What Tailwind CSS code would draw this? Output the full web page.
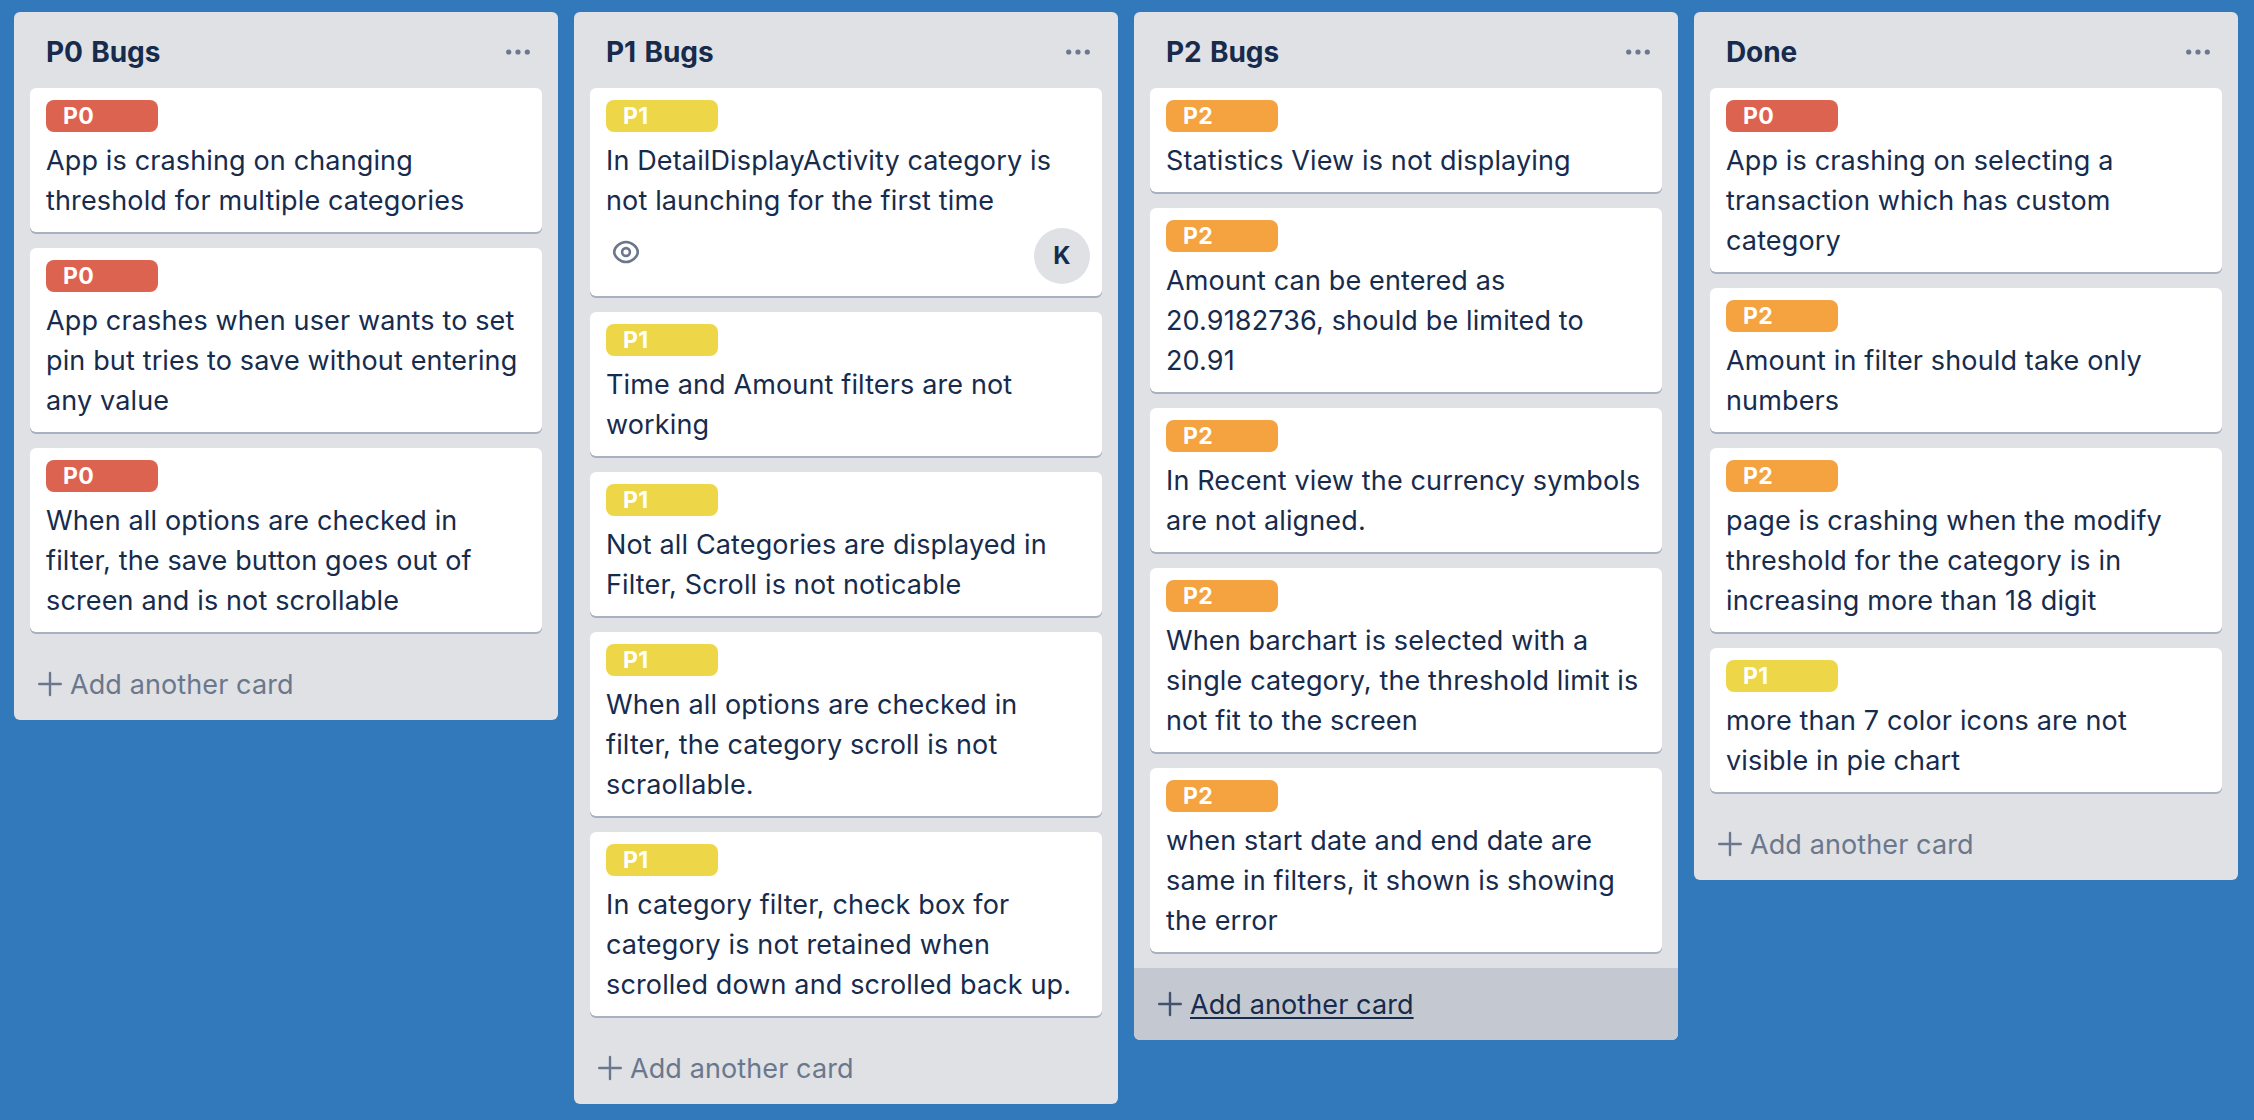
<!DOCTYPE html>
<html lang="en">
<head>
<meta charset="utf-8">
<title>Bugs board</title>
<script src="https://cdn.jsdelivr.net/npm/@tailwindcss/browser@4"></script>
</head>
<body class="bg-[#3179ba] font-['Inter','Liberation_Sans',sans-serif] text-[27px] leading-10 text-[#172b4d] antialiased">
<main id="board" class="flex h-[1120px] w-[2254px] items-start gap-4 overflow-hidden pt-3 pl-3.5"></main>
<script>
const labels = {
  P0: 'bg-[#dd6351] text-white',
  P1: 'bg-[#edd647] text-white',
  P2: 'bg-[#f4a340] text-white',
};
const lists = [
  { title: 'P0 Bugs', cards: [
    ['P0', 'App is crashing on changing|threshold for multiple categories'],
    ['P0', 'App crashes when user wants to set|pin but tries to save without entering|any value'],
    ['P0', 'When all options are checked in|filter, the save button goes out of|screen and is not scrollable'],
  ]},
  { title: 'P1 Bugs', cards: [
    ['P1', 'In DetailDisplayActivity category is|not launching for the first time', 'K'],
    ['P1', 'Time and Amount filters are not|working'],
    ['P1', 'Not all Categories are displayed in|Filter, Scroll is not noticable'],
    ['P1', 'When all options are checked in|filter, the category scroll is not|scraollable.'],
    ['P1', 'In category filter, check box for|category is not retained when|scrolled down and scrolled back up.'],
  ]},
  { title: 'P2 Bugs', active: true, cards: [
    ['P2', 'Statistics View is not displaying'],
    ['P2', 'Amount can be entered as|20.9182736, should be limited to|20.91'],
    ['P2', 'In Recent view the currency symbols|are not aligned.'],
    ['P2', 'When barchart is selected with a|single category, the threshold limit is|not fit to the screen'],
    ['P2', 'when start date and end date are|same in filters, it shown is showing|the error'],
  ]},
  { title: 'Done', cards: [
    ['P0', 'App is crashing on selecting a|transaction which has custom|category'],
    ['P2', 'Amount in filter should take only|numbers'],
    ['P2', 'page is crashing when the modify|threshold for the category is in|increasing more than 18 digit'],
    ['P1', 'more than 7 color icons are not|visible in pie chart'],
  ]},
];

const badges = (initial) => `
  <div class="flex h-16 items-start justify-between pt-2">
    <svg class="mt-2.5 ml-1.5 h-7 w-7" viewBox="0 0 28 28" fill="none" stroke="#6b778c" stroke-width="2.6">
      <path d="M2.200 14C2.200 9.500 8 4 14 4S25.800 9.500 25.800 14S20 24 14 24S2.200 18.500 2.200 14Z"/>
      <circle cx="14" cy="14" r="3.900"/>
    </svg>
    <span class="-mr-1 flex h-14 w-14 items-center justify-center rounded-full bg-[#dfe1e5] text-[24px] font-bold">${initial}</span>
  </div>`;

const card = ([label, text, member]) => `
  <article class="rounded-md bg-white px-4 py-3 shadow-[0_2px_0_#a9b0bf]">
    <span class="block h-8 w-28 rounded-lg pl-[17px] text-[23px] leading-8 font-bold tracking-[0.4px] ${labels[label]}">${label}</span>
    <p class="-mb-px pt-[9px] whitespace-nowrap tracking-[0.14px]">${text.split('|').join('<br>')}</p>
    ${member ? badges(member) : ''}
  </article>`;

const list = ({ title, cards, active }) => `
  <section class="w-[544px] shrink-0 overflow-hidden rounded-md bg-[#dfe1e5]">
    <header class="flex h-[76px] items-center justify-between pr-7 pl-8">
      <h2 class="pt-1 text-[28px] font-bold tracking-[-0.1px] [word-spacing:2px]">${title}</h2>
      <svg class="h-6 w-6" viewBox="0 0 24 24" fill="#6b778c"><circle cx="2.700" cy="14" r="2.600"/><circle cx="12" cy="14" r="2.600"/><circle cx="21.300" cy="14" r="2.600"/></svg>
    </header>
    <div class="flex flex-col gap-4 px-4 pb-4">${cards.map(card).join('')}</div>
    <footer class="flex h-[72px] items-center gap-2 pl-6 ${active ? 'bg-[#c4c8d0]' : 'text-[#6b778c]'}">
      <svg class="h-[26px] w-6" viewBox="0 0 24 26" fill="none" stroke="${active ? '#42526e' : '#6b778c'}" stroke-width="2.400" stroke-linecap="round"><path d="M12 2V24M1.200 13H22.800"/></svg>
      <span class="pt-0.5 tracking-[0.1px] ${active ? 'underline decoration-2 underline-offset-[3px] [text-decoration-skip-ink:none]' : ''}">Add another card</span>
    </footer>
  </section>`;

document.getElementById('board').innerHTML = lists.map(list).join('');
</script>
</body>
</html>
